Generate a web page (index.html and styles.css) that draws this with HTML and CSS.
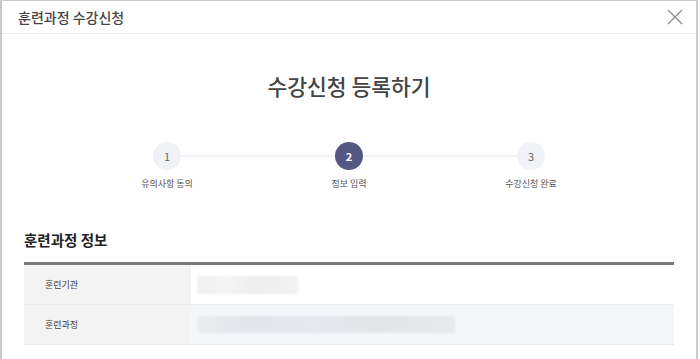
FILE: index.html
```html
<!DOCTYPE html>
<html>
<head>
    <title>훈련과정 수강신청</title>
    <meta charset="utf-8">
    <link rel="stylesheet" href="styles.css">
</head>
<body>
    <div class="dialog">
        <div class="dialog-header">
            <h1>훈련과정 수강신청</h1>
            <button type="button" class="close-btn" aria-label="닫기">
                <svg width="16" height="16" viewBox="0 0 16 16">
                    <path d="M1 1 L15 15 M15 1 L1 15" stroke="#8c8c8c" stroke-width="1.3" fill="none"/>
                </svg>
            </button>
        </div>

        <div class="dialog-body">
            <h2 class="page-title">수강신청 등록하기</h2>

            <ol class="steps">
                <li class="step">
                    <span class="step-num">1</span>
                    <span class="step-label">유의사항 동의</span>
                </li>
                <li class="step active">
                    <span class="step-num">2</span>
                    <span class="step-label">정보 입력</span>
                </li>
                <li class="step">
                    <span class="step-num">3</span>
                    <span class="step-label">수강신청 완료</span>
                </li>
            </ol>

            <h3 class="section-title">훈련과정 정보</h3>
            <table class="info-table">
                <tr>
                    <th>훈련기관</th>
                    <td><span class="masked masked-short"></span></td>
                </tr>
                <tr class="alt">
                    <th>훈련과정</th>
                    <td><span class="masked masked-long"></span></td>
                </tr>
            </table>
        </div>
    </div>
</body>
</html>
```

FILE: styles.css
```css
body {
    margin: 0;
    font-family: "Noto Sans CJK KR", "Noto Sans", sans-serif;
    background-color: #fff;
}
.dialog {
    width: 694px;
    height: 358px;
    overflow: hidden;
    border: 2px solid #c9c9c9;
    border-top-width: 1px;
    border-bottom: none;
    background-color: #fff;
}
.dialog-header {
    height: 32px;
    border-bottom: 1px solid #ececec;
    display: flex;
    align-items: center;
    justify-content: space-between;
    padding: 0 12px 0 16px;
}
.dialog-header h1 {
    margin: 0;
    font-size: 14px;
    font-weight: 500;
    color: #444;
}
.close-btn {
    border: none;
    background: none;
    padding: 0;
    width: 18px;
    height: 18px;
    display: flex;
    align-items: center;
    justify-content: center;
    cursor: pointer;
}
.dialog-body {
    padding: 0 22px;
}
.page-title {
    margin: 37px 0 0;
    text-align: center;
    font-size: 21.5px;
    line-height: 30px;
    font-weight: 500;
    color: #444;
}
.steps {
    list-style: none;
    margin: 41px auto 0;
    padding: 0;
    width: 546px;
    display: flex;
}
.step {
    position: relative;
    flex: 1;
    display: flex;
    flex-direction: column;
    align-items: center;
}
.step:not(:last-child)::after {
    content: "";
    position: absolute;
    left: 50%;
    width: 100%;
    top: 13px;
    height: 2px;
    background-color: #f0f2f7;
}
.step-num {
    position: relative;
    z-index: 1;
    width: 28px;
    height: 28px;
    border-radius: 50%;
    background-color: #f0f2f7;
    color: #666;
    font-size: 11px;
    display: flex;
    align-items: center;
    justify-content: center;
}
.step.active .step-num {
    background-color: #525882;
    color: #fff;
    font-weight: bold;
}
.step-label {
    margin-top: 7px;
    font-size: 9px;
    line-height: 14px;
    color: #555;
}
.section-title {
    margin: 39px 0 12px;
    font-size: 14.5px;
    line-height: 20px;
    font-weight: bold;
    color: #222;
}
.info-table {
    width: 650px;
    border-collapse: collapse;
    border-top: 3px solid #7a7a7a;
}
.info-table th,
.info-table td {
    height: 39px;
    padding: 0;
    border-bottom: 1px solid #ebebeb;
}
.info-table th {
    width: 146px;
    padding-left: 21px;
    text-align: left;
    font-size: 9px;
    font-weight: normal;
    color: #444;
    background-color: #f3f3f3;
}
.info-table td {
    padding-left: 6px;
}
.info-table tr.alt td {
    background-color: #f4f7fa;
}
.masked {
    display: block;
    filter: blur(1px);
}
.masked-short {
    width: 101px;
    height: 18px;
    background: linear-gradient(90deg, #f1f1f1 0%, #f4f4f4 30%, #eeeeee 55%, #f0f0f0 85%, #f3f3f3 100%);
}
.masked-long {
    width: 258px;
    height: 17px;
    background: linear-gradient(90deg, #eaedf0 0%, #e3e6ea 20%, #e6e9ed 45%, #e3e6e9 70%, #e8ebee 100%);
}
```
